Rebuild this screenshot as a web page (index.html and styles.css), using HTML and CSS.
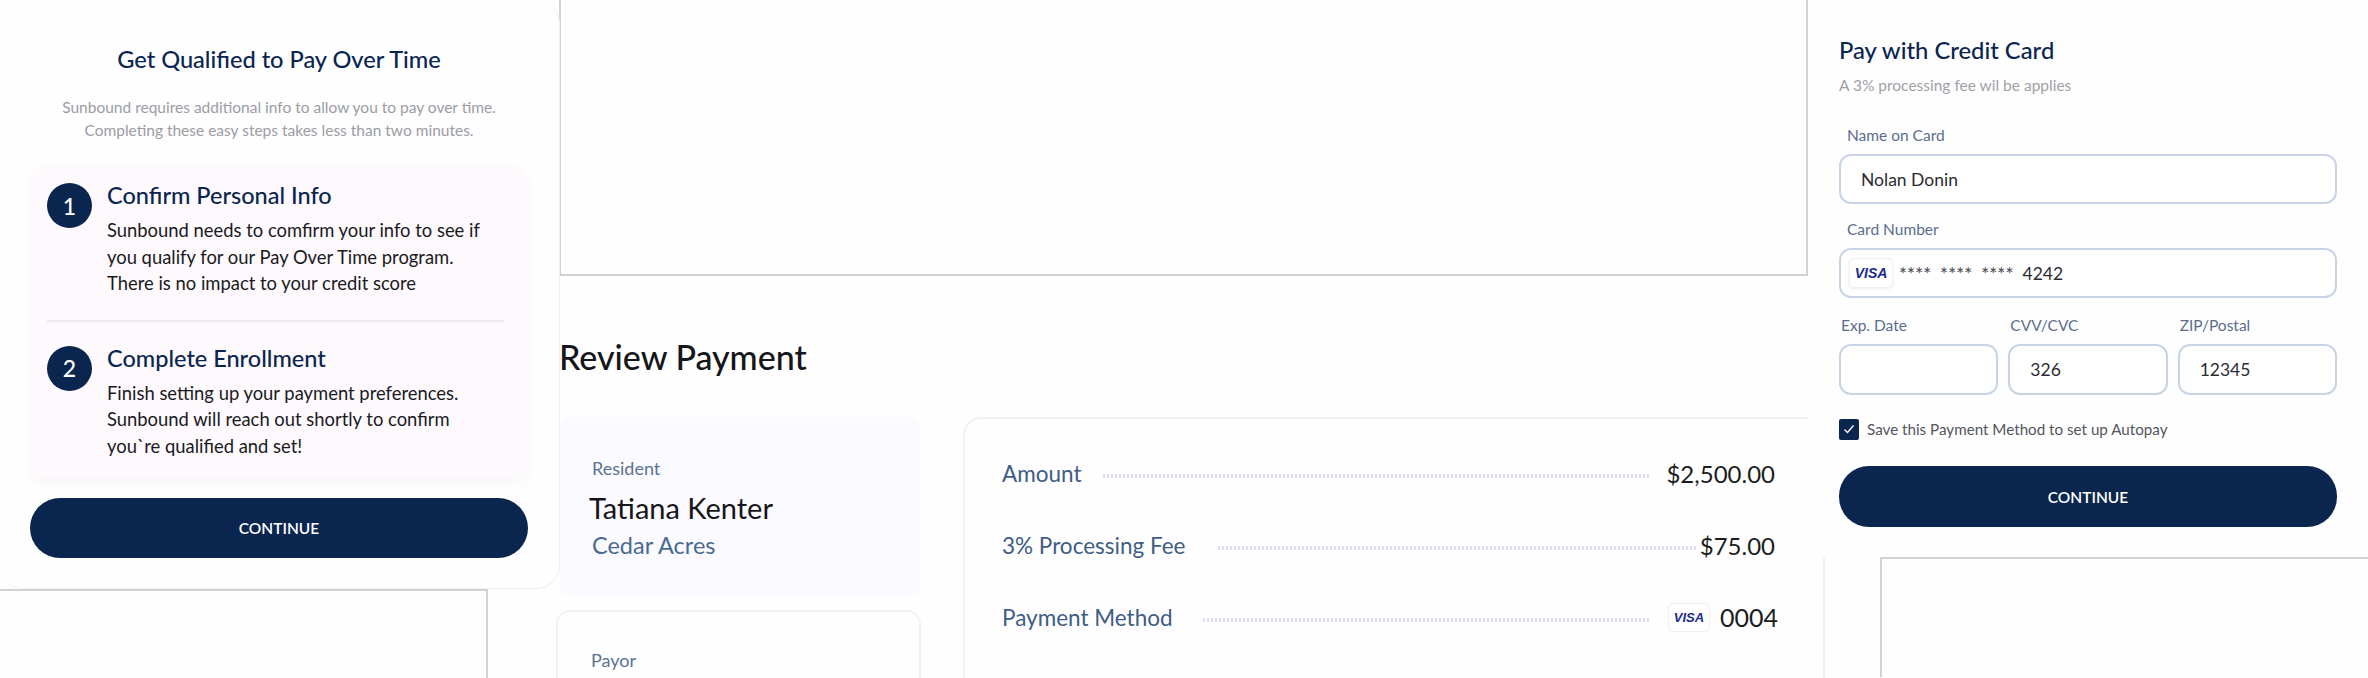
FILE: index.html
```html
<!DOCTYPE html>
<html lang="en">
<head>
    <meta charset="UTF-8">
    <meta name="viewport" content="width=device-width, initial-scale=1.0">
    <title>Review Payment</title>
    <link rel="stylesheet" href="styles.css">
</head>
<body>
    <div class="side side-left">
        <div class="panel qualify-panel">
            <h2 class="qualify-title">Get Qualified to Pay Over Time</h2>
            <p class="qualify-sub">Sunbound requires additional info to allow you to pay over time.<br>Completing these easy steps takes less than two minutes.</p>

            <div class="steps">
                <div class="step">
                    <div class="step-num">1</div>
                    <div>
                        <h3>Confirm Personal Info</h3>
                        <p>Sunbound needs to comfirm your info to see if<br>you qualify for our Pay Over Time program.<br>There is no impact to your credit score</p>
                    </div>
                </div>
                <div class="step step-last">
                    <div class="step-num">2</div>
                    <div>
                        <h3>Complete Enrollment</h3>
                        <p>Finish setting up your payment preferences.<br>Sunbound will reach out shortly to confirm<br>you`re qualified and set!</p>
                    </div>
                </div>
            </div>

            <button class="continue-btn">CONTINUE</button>
        </div>
        <div class="frame frame-left"></div>
    </div>

    <div class="middle">
        <div class="frame frame-top"></div>
        <h1 class="review-title">Review Payment</h1>

        <div class="review-grid">
            <div class="people">
                <div class="person person-resident">
                    <div class="person-label">Resident</div>
                    <div class="person-name">Tatiana Kenter</div>
                    <div class="person-place">Cedar Acres</div>
                </div>
                <div class="person person-payor">
                    <div class="person-label">Payor</div>
                </div>
            </div>

            <div class="summary">
                <div class="summary-row">
                    <span class="summary-label">Amount</span>
                    <span class="dots dots-amount"></span>
                    <span class="summary-value">$2,500.00</span>
                </div>
                <div class="summary-row">
                    <span class="summary-label">3% Processing Fee</span>
                    <span class="dots dots-fee"></span>
                    <span class="summary-value">$75.00</span>
                </div>
                <div class="summary-row">
                    <span class="summary-label">Payment Method</span>
                    <span class="dots dots-method"></span>
                    <span class="visa-badge">VISA</span>
                    <span class="summary-value method-last4">0004</span>
                </div>
            </div>
        </div>
    </div>

    <div class="side side-right">
        <div class="panel card-panel">
            <h2 class="card-title">Pay with Credit Card</h2>
            <p class="card-sub">A 3% processing fee wil be applies</p>

            <div class="field field-first">
                <label class="field-label field-label-inset">Name on Card</label>
                <div class="input input-name">Nolan Donin</div>
            </div>

            <div class="field">
                <label class="field-label field-label-inset">Card Number</label>
                <div class="input input-card">
                    <span class="visa-badge visa-badge-input">VISA</span>
                    <span class="card-mask">**** **** ****</span>
                    <span>4242</span>
                </div>
            </div>

            <div class="field-row">
                <div>
                    <label class="field-label">Exp. Date</label>
                    <div class="input input-small"></div>
                </div>
                <div>
                    <label class="field-label">CVV/CVC</label>
                    <div class="input input-small">326</div>
                </div>
                <div>
                    <label class="field-label">ZIP/Postal</label>
                    <div class="input input-small">12345</div>
                </div>
            </div>

            <div class="save-row">
                <span class="checkbox">
                    <svg width="14" height="14" viewBox="0 0 14 14" fill="none"><polyline points="2.5,7.5 5.5,10.5 11.5,3.5" stroke="#fff" stroke-width="1.3"/></svg>
                </span>
                <span>Save this Payment Method to set up Autopay</span>
            </div>

            <button class="continue-btn continue-btn-card">CONTINUE</button>
        </div>
        <div class="frame frame-right"></div>
    </div>
</body>
</html>
```

FILE: styles.css
```css
* {
    margin: 0;
    padding: 0;
    box-sizing: border-box;
}

body {
    font-family: 'Lato', 'Noto Sans', sans-serif;
    background: #fefefe;
    height: 678px;
    overflow: hidden;
    display: flex;
    color: #16161a;
}

.side {
    width: 560px;
    flex-shrink: 0;
    position: relative;
    z-index: 2;
}

.panel {
    background: #fefeff;
    position: relative;
    z-index: 1;
}

.frame {
    border: 0 solid #d2d2d5;
}

.frame-left {
    width: 488px;
    height: 89px;
    border-top-width: 2px;
    border-right-width: 2px;
}

.frame-right {
    width: 488px;
    height: 120px;
    margin-left: 72px;
    border-top-width: 2px;
    border-left-width: 2px;
}

.frame-top {
    height: 276px;
    margin-left: -1px;
    border-left-width: 2px;
    border-right-width: 2px;
    border-bottom-width: 2px;
}

/* left panel */
.qualify-panel {
    height: 589px;
    padding: 44px 31px 0 30px;
    border-right: 1px solid #f0f0f3;
    border-bottom: 1px solid #f0f0f3;
    border-radius: 0 24px 24px 24px;
}

.qualify-title {
    font-size: 23.6px;
    line-height: 30px;
    font-weight: 500;
    color: #0a2550;
    text-align: center;
}

.qualify-sub {
    margin-top: 22px;
    font-size: 15.5px;
    line-height: 23px;
    color: #9c9ca2;
    text-align: center;
}

.steps {
    margin-top: 23px;
    padding: 0 24px 0 17px;
    background: #fdf9fc;
    border-radius: 16px;
    box-shadow: 0 6px 14px rgba(30, 30, 60, 0.03);
}

.step {
    display: flex;
    gap: 15px;
    padding: 15px 0 23px;
    border-bottom: 2px solid #ececef;
}

.step-last {
    padding: 21px 0 19px;
    border-bottom: none;
}

.step-num {
    width: 45px;
    height: 45px;
    margin-top: 3px;
    flex-shrink: 0;
    border-radius: 50%;
    background: #0a264f;
    color: #fff;
    font-size: 23px;
    font-weight: 500;
    display: flex;
    align-items: center;
    justify-content: center;
}

.step h3 {
    font-size: 23.5px;
    line-height: 30px;
    font-weight: 500;
    color: #0a2550;
}

.step p {
    margin-top: 7px;
    font-size: 18.4px;
    line-height: 26.5px;
    color: #1a1a1e;
}

.continue-btn {
    display: block;
    width: 498px;
    height: 60px;
    margin-top: 20px;
    border: none;
    border-radius: 30px;
    background: #0a264f;
    color: #fff;
    font-family: inherit;
    font-size: 15.5px;
    font-weight: 600;
}

/* middle */
.middle {
    flex: 1;
    min-width: 0;
}

.review-title {
    margin-top: 58px;
    margin-left: -1px;
    font-size: 34px;
    line-height: 46px;
    font-weight: 500;
    color: #15151a;
}

.review-grid {
    margin-top: 37px;
    margin-right: -17px;
    display: flex;
    gap: 42px;
}

.people {
    width: 361px;
    flex-shrink: 0;
}

.person {
    border-radius: 14px;
    padding: 39px 33px;
}

.person-resident {
    height: 180px;
    margin-left: -1px;
    background: #fbfaff;
}

.person-payor {
    height: 180px;
    margin-top: 13px;
    margin-left: -4px;
    padding-top: 36px;
    background: #fefeff;
    border: 2px solid #f2f2f6;
}

.person-label {
    font-size: 18px;
    line-height: 24px;
    color: #5a7394;
}

.person-name {
    margin-top: 10px;
    margin-left: -3px;
    font-size: 29px;
    line-height: 36px;
    color: #16161a;
}

.person-place {
    margin-top: 4px;
    font-size: 23.5px;
    line-height: 30px;
    color: #4a6a90;
}

.summary {
    flex: 1;
    height: 300px;
    padding: 34px 33px 0 37px;
    background: #fefeff;
    border: 2px solid #f2f2f6;
    border-radius: 18px;
}

.summary-row {
    display: flex;
    align-items: center;
    height: 40px;
    margin-bottom: 32px;
    padding-right: 15px;
}

.summary-label {
    font-size: 22.5px;
    color: #3f5d85;
}

.dots {
    flex: 1;
    height: 4px;
    margin-top: 6px;
    background-image: repeating-linear-gradient(90deg, #dcdcfb 0 2px, transparent 2px 4px);
}

.dots-amount {
    margin-left: 22px;
    margin-right: 15px;
}

.dots-fee {
    margin-left: 33px;
    margin-right: 4px;
}

.dots-method {
    margin-left: 30px;
    margin-right: 19px;
}

.summary-value {
    font-size: 24px;
    color: #1c1c20;
}

.method-last4 {
    margin-left: 10px;
    margin-right: -3px;
    font-size: 25px;
}

.visa-badge {
    display: inline-flex;
    align-items: center;
    justify-content: center;
    width: 42px;
    height: 29px;
    flex-shrink: 0;
    background: #fff;
    border: 1px solid #efeff4;
    border-radius: 5px;
    font-family: 'Liberation Sans', sans-serif;
    font-size: 13px;
    font-weight: bold;
    font-style: italic;
    color: #1a2a8c;
}

/* right panel */
.card-panel {
    height: 557px;
    padding: 35px 31px 0 31px;
    border-radius: 24px 0 24px 0;
}

.card-title {
    font-size: 23.8px;
    line-height: 30px;
    font-weight: 500;
    color: #0a2550;
}

.card-sub {
    margin-top: 10px;
    font-size: 15.5px;
    line-height: 20px;
    color: #a0a0a6;
}

.field {
    margin-top: 15px;
}

.field-first {
    margin-top: 30px;
}

.field-label {
    display: block;
    margin-left: 2px;
    margin-bottom: 9px;
    font-size: 15.5px;
    line-height: 20px;
    color: #5c6d8c;
}

.field-label-inset {
    margin-left: 8px;
}

.input {
    height: 50px;
    padding: 0 20px;
    display: flex;
    align-items: center;
    border: 2px solid #c8d4e6;
    border-radius: 12px;
    background: #fff;
    font-size: 17.5px;
    color: #2c2c30;
}

.input-card {
    padding-left: 8px;
    gap: 6px;
}

.visa-badge-input {
    width: 44px;
    height: 30px;
    font-size: 14px;
    box-shadow: 0 1px 3px rgba(40, 40, 90, 0.08);
}

.card-mask {
    word-spacing: 4px;
    font-size: 19px;
    font-weight: 500;
    color: #55555c;
    margin-right: 3px;
}

.field-row {
    margin-top: 17px;
    display: grid;
    grid-template-columns: repeat(3, 1fr);
    gap: 10px;
}

.input-small {
    height: 51px;
}

.save-row {
    margin-top: 24px;
    display: flex;
    align-items: center;
    gap: 8px;
    height: 20px;
    font-size: 15.2px;
    color: #55555c;
}

.checkbox {
    width: 20px;
    height: 21px;
    flex-shrink: 0;
    display: flex;
    align-items: center;
    justify-content: center;
    border-radius: 2px;
    background: #0a264f;
}

.continue-btn-card {
    width: 498px;
    height: 61px;
    margin-top: 27px;
}
```
